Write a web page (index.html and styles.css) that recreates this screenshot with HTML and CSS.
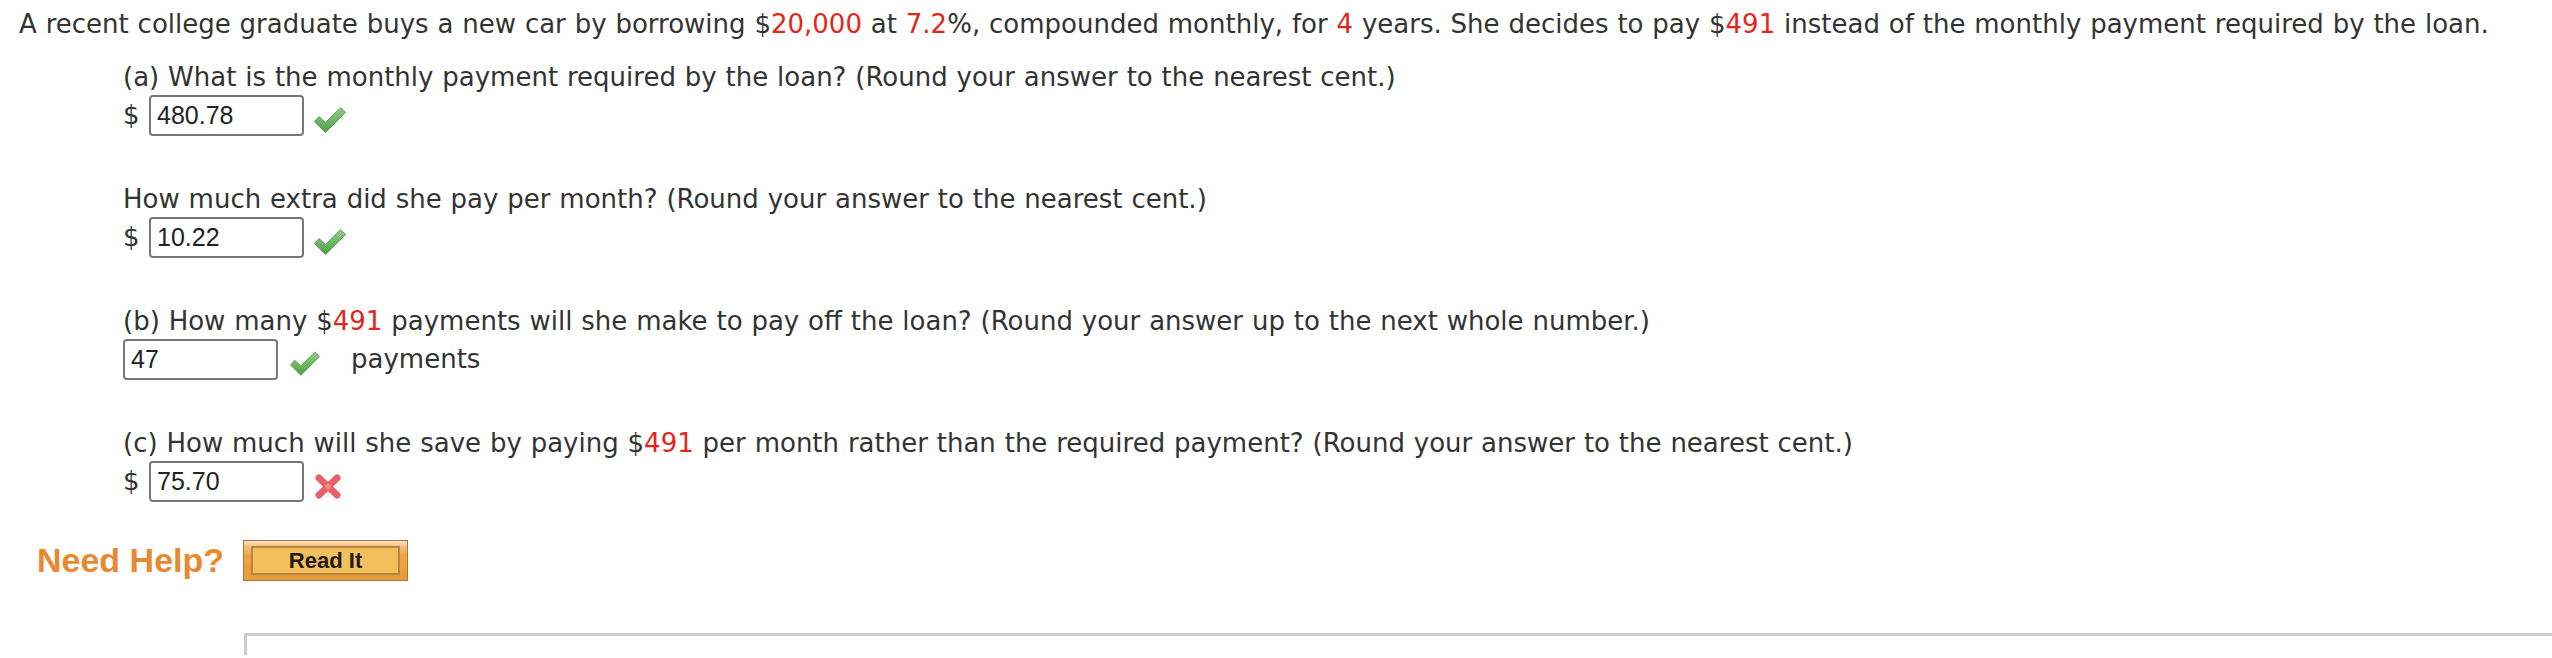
FILE: index.html
```html
<!DOCTYPE html>
<html lang="en">
<head>
<meta charset="utf-8">
<title>Loan question</title>
<link rel="stylesheet" href="styles.css">
</head>
<body>
<div class="page">
  <p class="intro">A recent college graduate buys a new car by borrowing $<span class="red">20,000</span> at <span class="red">7.2</span>%, compounded monthly, for <span class="red">4</span> years. She decides to pay $<span class="red">491</span> instead of the monthly payment required by the loan.</p>
  <div class="parts">
    <div class="q">
      <p class="line">(a) What is the monthly payment required by the loan? (Round your answer to the nearest cent.)</p>
      <div class="row">
        <span class="cur">$</span>
        <input class="inp" type="text" value="480.78" readonly>
        <svg class="mark" width="32" height="26" viewBox="0 0 32 26"><defs><linearGradient id="g1" x1="0" y1="0" x2="0" y2="1"><stop offset="0" stop-color="#8fd086"/><stop offset="1" stop-color="#4f9e48"/></linearGradient></defs><polygon points="0.5,14.5 5,9.5 11.5,15.5 26.5,0.8 31.5,5.5 11.5,25.5" fill="url(#g1)" stroke="#5a9e52" stroke-width="1" stroke-linejoin="round"/></svg>
      </div>
    </div>
    <div class="q">
      <p class="line">How much extra did she pay per month? (Round your answer to the nearest cent.)</p>
      <div class="row">
        <span class="cur">$</span>
        <input class="inp" type="text" value="10.22" readonly>
        <svg class="mark" width="32" height="26" viewBox="0 0 32 26"><defs><linearGradient id="g2" x1="0" y1="0" x2="0" y2="1"><stop offset="0" stop-color="#8fd086"/><stop offset="1" stop-color="#4f9e48"/></linearGradient></defs><polygon points="0.5,14.5 5,9.5 11.5,15.5 26.5,0.8 31.5,5.5 11.5,25.5" fill="url(#g2)" stroke="#5a9e52" stroke-width="1" stroke-linejoin="round"/></svg>
      </div>
    </div>
    <div class="q">
      <p class="line">(b) How many $<span class="red">491</span> payments will she make to pay off the loan? (Round your answer up to the next whole number.)</p>
      <div class="row">
        <input class="inp" type="text" value="47" readonly>
        <svg class="mark mark-b" width="30" height="25" viewBox="0 0 32 26"><defs><linearGradient id="g3" x1="0" y1="0" x2="0" y2="1"><stop offset="0" stop-color="#8fd086"/><stop offset="1" stop-color="#4f9e48"/></linearGradient></defs><polygon points="0.5,14.5 5,9.5 11.5,15.5 26.5,0.8 31.5,5.5 11.5,25.5" fill="url(#g3)" stroke="#5a9e52" stroke-width="1" stroke-linejoin="round"/></svg>
        <span class="unit">payments</span>
      </div>
    </div>
    <div class="q">
      <p class="line">(c) How much will she save by paying $<span class="red">491</span> per month rather than the required payment? (Round your answer to the nearest cent.)</p>
      <div class="row">
        <span class="cur">$</span>
        <input class="inp" type="text" value="75.70" readonly>
        <svg class="mark" width="28" height="27" viewBox="0 0 28 27"><line x1="5" y1="5" x2="23" y2="22" stroke="#e5626a" stroke-width="7" stroke-linecap="round"/><line x1="23" y1="5" x2="5" y2="22" stroke="#e5626a" stroke-width="7" stroke-linecap="round"/><circle cx="14" cy="13.5" r="3" fill="#ef8a90"/></svg>
      </div>
    </div>
  </div>
  <div class="help">
    <span class="need">Need Help?</span>
    <span class="btn"><span class="btn-inner">Read It</span></span>
  </div>
  <div class="panel"></div>
</div>
</body>
</html>
```

FILE: styles.css
```css
html, body {
  margin: 0;
  background: #ffffff;
}
body {
  overflow: hidden;
  font-family: "DejaVu Sans", Verdana, sans-serif;
  font-size: 26px;
  word-spacing: 0.6px;
  color: #333333;
}
.page {
  padding: 6px 0 0 19px;
}
.intro {
  margin: 0;
  line-height: 36px;
  white-space: nowrap;
}
.red {
  color: #e3261b;
}
.parts {
  margin: 17px 0 0 104px;
}
.q + .q {
  margin-top: 45px;
}
.line {
  margin: 0;
  line-height: 36px;
  white-space: nowrap;
}
.row {
  display: flex;
  align-items: flex-start;
  height: 41px;
}
.cur {
  line-height: 41px;
  width: 26px;
}
.inp {
  box-sizing: border-box;
  width: 155px;
  height: 41px;
  margin: 0;
  padding: 0 0 0 6px;
  border: 2px solid #777777;
  border-radius: 4px;
  background: #ffffff;
  font-family: "Liberation Sans", Arial, sans-serif;
  font-size: 25px;
  color: #222222;
  outline: none;
}
.mark {
  margin: 12px 0 0 10px;
  flex: none;
}
.mark-b {
  margin-left: 12px;
}
.unit {
  margin-left: 31px;
  line-height: 41px;
}
.help {
  display: flex;
  align-items: center;
  margin: 38px 0 0 18px;
}
.need {
  font-family: "Liberation Sans", Arial, sans-serif;
  font-weight: bold;
  font-size: 34px;
  word-spacing: 0;
  color: #e8892f;
}
.btn {
  box-sizing: border-box;
  display: block;
  width: 165px;
  height: 41px;
  margin-left: 19px;
  padding: 5px 7px 5px 7px;
  border: 1px solid #a8763a;
  background: linear-gradient(#fbe3c6 0, #f6c488 12%, #eea445 35%, #ea9b3d 100%);
}
.btn-inner {
  box-sizing: border-box;
  display: block;
  height: 29px;
  border: 2px solid #b9843e;
  background: #f2bf5c;
  font-family: "Liberation Sans", Arial, sans-serif;
  font-weight: bold;
  font-size: 22px;
  word-spacing: 0;
  line-height: 25px;
  text-align: center;
  color: #1f1a10;
}
.panel {
  margin: 52px 0 0 225px;
  height: 19px;
  border-top: 3px solid #cccccc;
  border-left: 3px solid #cccccc;
}
```
